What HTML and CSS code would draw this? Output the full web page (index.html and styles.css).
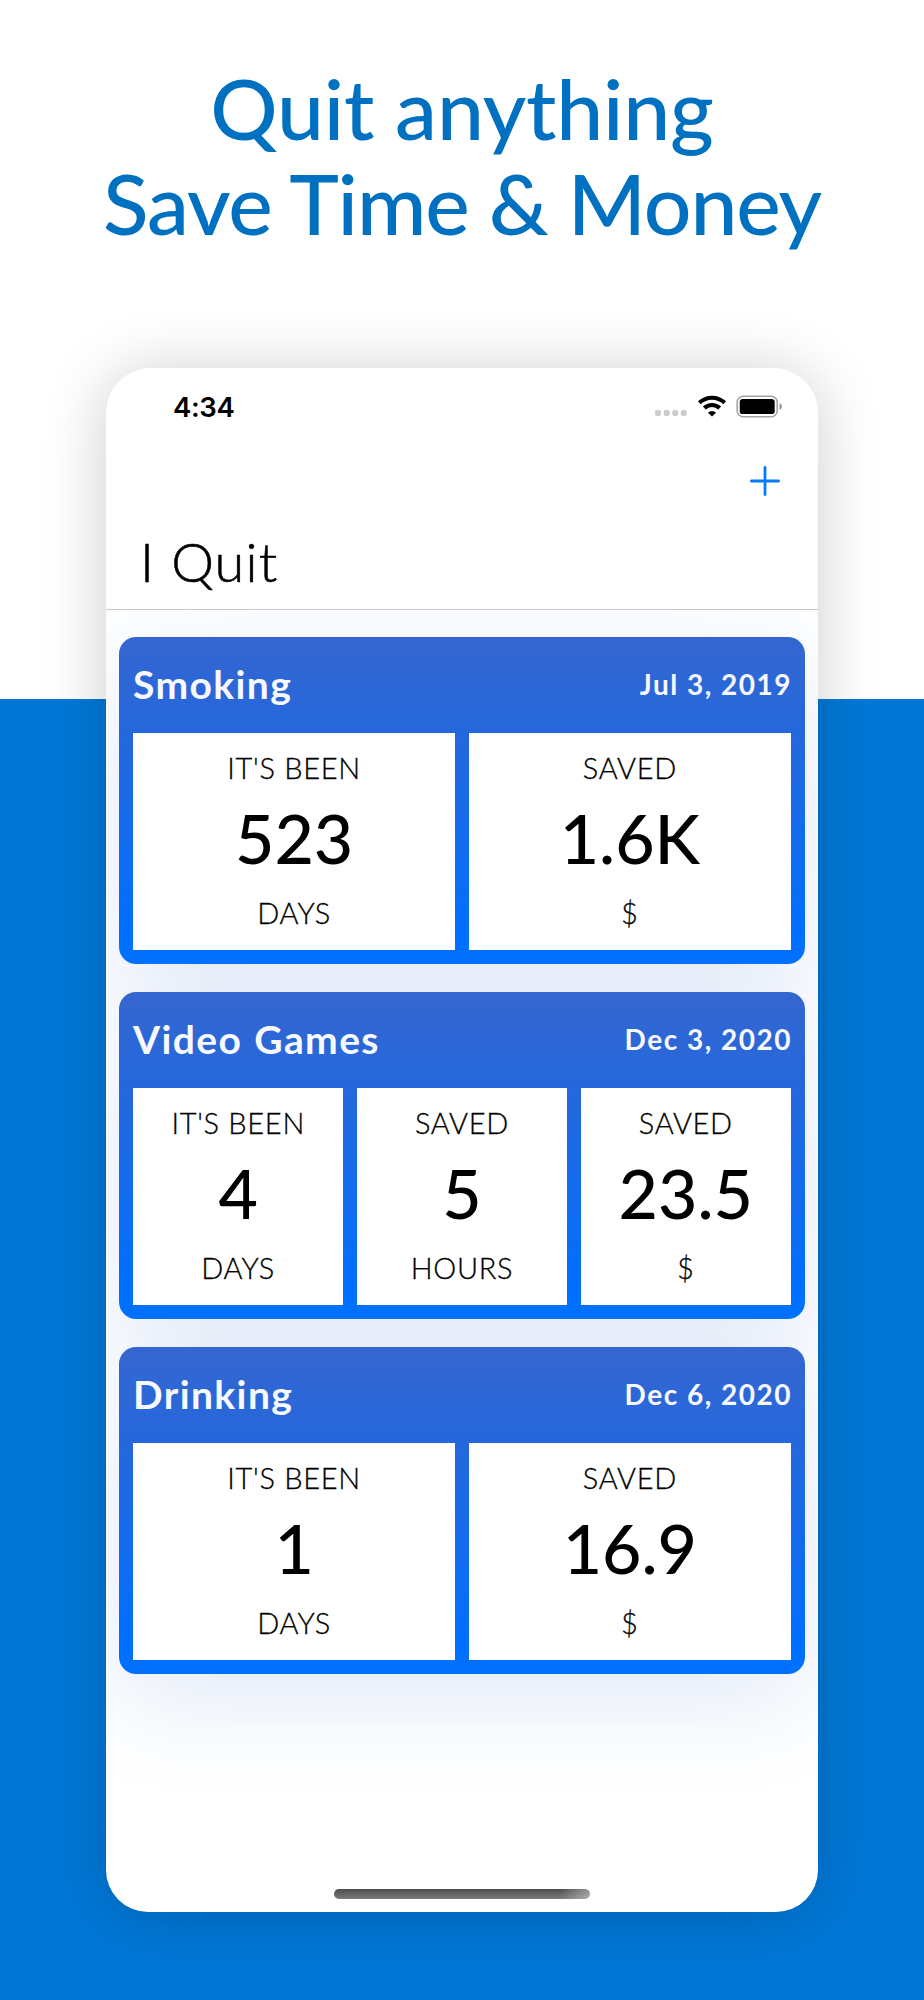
FILE: index.html
```
<!DOCTYPE html>
<html lang="en">
<head>
  <meta charset="UTF-8" />
  <meta name="viewport" content="width=device-width, initial-scale=1.0"/>
  <title>I Quit</title>
  <link rel="stylesheet" href="styles.css">
</head>
<body>
  <h1 class="headline">
    <span class="line">Quit anything</span>
    <span class="line tight">Save Time &amp; Money</span>
  </h1>

  <main class="phone">
    <header>
      <div class="status-bar">
        <span class="time">4:34</span>
        <svg class="status-icons" width="127" height="25" viewBox="0 0 127 25">
          <g fill="#cccccc">
            <rect x="0" y="16" width="6" height="6" rx="2"/>
            <rect x="8.7" y="16" width="6" height="6" rx="2"/>
            <rect x="17.2" y="16" width="6" height="6" rx="2"/>
            <rect x="25.8" y="16" width="6" height="6" rx="2"/>
          </g>
          <g fill="none" stroke="#000" stroke-width="4" stroke-linejoin="round">
            <path d="M44.300 8.800a18.400 18.400 0 0 1 25.400 0"/>
            <path d="M49.300 14a11.100 11.100 0 0 1 15.400 0"/>
          </g>
          <path d="M57 22.400l-4-3.700a5.700 5.700 0 0 1 8 0z"/>
          <rect x="82.200" y="2.300" width="40" height="20.400" rx="6" fill="none" stroke="#a3a3a3" stroke-width="1.6"/>
          <rect x="84.700" y="4.900" width="35" height="15.200" rx="3.200"/>
          <path d="M124.600 9.200c3 1 3 5.600 0 6.600z" fill="#8f8f8f"/>
        </svg>
      </div>
      <div class="nav-bar">
        <svg width="32" height="32" viewBox="0 0 32 32" stroke="#007aff" stroke-width="2.8" stroke-linecap="round">
          <path d="M16 2.400v27.200M2.400 16h27.200"/>
        </svg>
      </div>
      <h2>I Quit</h2>
    </header>

    <div class="list">
      <section class="card">
        <div class="card-head">
          <h3>Smoking</h3>
          <span class="date">Jul 3, 2019</span>
        </div>
        <div class="tiles">
          <div class="tile"><p>IT'S BEEN</p><strong>523</strong><p>DAYS</p></div>
          <div class="tile"><p>SAVED</p><strong>1.6K</strong><p>$</p></div>
        </div>
      </section>

      <section class="card">
        <div class="card-head">
          <h3>Video Games</h3>
          <span class="date">Dec 3, 2020</span>
        </div>
        <div class="tiles">
          <div class="tile"><p>IT'S BEEN</p><strong>4</strong><p>DAYS</p></div>
          <div class="tile"><p>SAVED</p><strong>5</strong><p>HOURS</p></div>
          <div class="tile"><p>SAVED</p><strong>23.5</strong><p>$</p></div>
        </div>
      </section>

      <section class="card">
        <div class="card-head">
          <h3>Drinking</h3>
          <span class="date">Dec 6, 2020</span>
        </div>
        <div class="tiles">
          <div class="tile"><p>IT'S BEEN</p><strong>1</strong><p>DAYS</p></div>
          <div class="tile"><p>SAVED</p><strong>16.9</strong><p>$</p></div>
        </div>
      </section>
    </div>

    <div class="home-indicator"></div>
  </main>
</body>
</html>
```
FILE: styles.css
```
:root {
  --brand: #0070c0;
  --backdrop: #0078d8;
}

* {
  box-sizing: border-box;
}

body {
  margin: 0;
  height: 2000px;
  overflow: hidden;
  font-family: Lato, sans-serif;
  color: #000;
  background: linear-gradient(#fff 699px, var(--backdrop) 699px);
}

h1, h2, h3, p {
  margin: 0;
  font-weight: 400;
}

.headline {
  padding-top: 60px;
  font-size: 84px;
  font-weight: 500;
  line-height: 95px;
  text-align: center;
  color: var(--brand);
}

.line {
  display: block;
  letter-spacing: -0.2px;
}

.tight {
  letter-spacing: -1.1px;
}

.phone {
  display: flex;
  flex-direction: column;
  width: 712px;
  height: 1544px;
  margin: 118px auto 0;
  background: #fff;
  border-radius: 45px 45px 42px 42px;
  overflow: hidden;
  box-shadow: 0 4px 64px rgba(0, 0, 0, 0.2);
}

header {
  height: 242px;
  border-bottom: 1px solid #c8c8ca;
}

.status-bar {
  display: flex;
  justify-content: space-between;
  align-items: center;
  height: 77px;
  padding: 0 36px 0 67px;
}

.time {
  font-family: Inter, sans-serif;
  font-size: 27.5px;
  font-weight: 600;
  letter-spacing: -0.4px;
}

.nav-bar {
  display: flex;
  justify-content: flex-end;
  align-items: center;
  height: 72px;
  padding-right: 37px;
}

h2 {
  padding: 10px 0 0 34px;
  font-size: 54px;
  font-weight: 300;
  line-height: 70px;
  letter-spacing: 1.2px;
  -webkit-text-stroke: 0.6px #000;
}

.list {
  flex: 1;
  display: flex;
  flex-direction: column;
  gap: 28px;
  padding: 27px 13px 0;
  isolation: isolate;
  overflow: hidden;
}

.card {
  position: relative;
  height: 327px;
  padding: 0 14px 14px;
  border-radius: 17px;
  background: linear-gradient(#3566d0, #2468dd 30%, #0070ff 92%);
}

/* kept behind every card so it never tints the neighbours */
.card::before {
  content: "";
  position: absolute;
  inset: 0;
  z-index: -1;
  border-radius: inherit;
  box-shadow: 0 27px 100px rgba(51, 102, 204, 0.14);
}

.card-head {
  display: flex;
  justify-content: space-between;
  align-items: center;
  height: 93px;
  margin-bottom: 3px;
  color: #f8f9ff;
}

h3 {
  font-size: 39px;
  font-weight: 700;
  letter-spacing: 1.4px;
  word-spacing: 1px;
}

.date {
  font-size: 28px;
  font-weight: 700;
  letter-spacing: 1.5px;
  margin-right: -1px;
}

.tiles {
  display: flex;
  gap: 13.4px;
}

.tile {
  flex: 1 1 0;
  height: 217px;
  padding-top: 17px;
  background: #fff;
  text-align: center;
}

.tile p {
  font-size: 29px;
  font-weight: 300;
  line-height: 35px;
  letter-spacing: 0.7px;
  -webkit-text-stroke: 0.3px #000;
}

.tile strong {
  display: block;
  margin-bottom: 5px;
  font-size: 68px;
  font-weight: 500;
  line-height: 105px;
}

.home-indicator {
  width: 256px;
  height: 10px;
  margin: 0 auto 13px;
  border-radius: 5px;
  background: linear-gradient(90deg, transparent 88%, rgba(255, 255, 255, 0.4)), linear-gradient(#4c4c4c, #7a7a7a);
}
```
